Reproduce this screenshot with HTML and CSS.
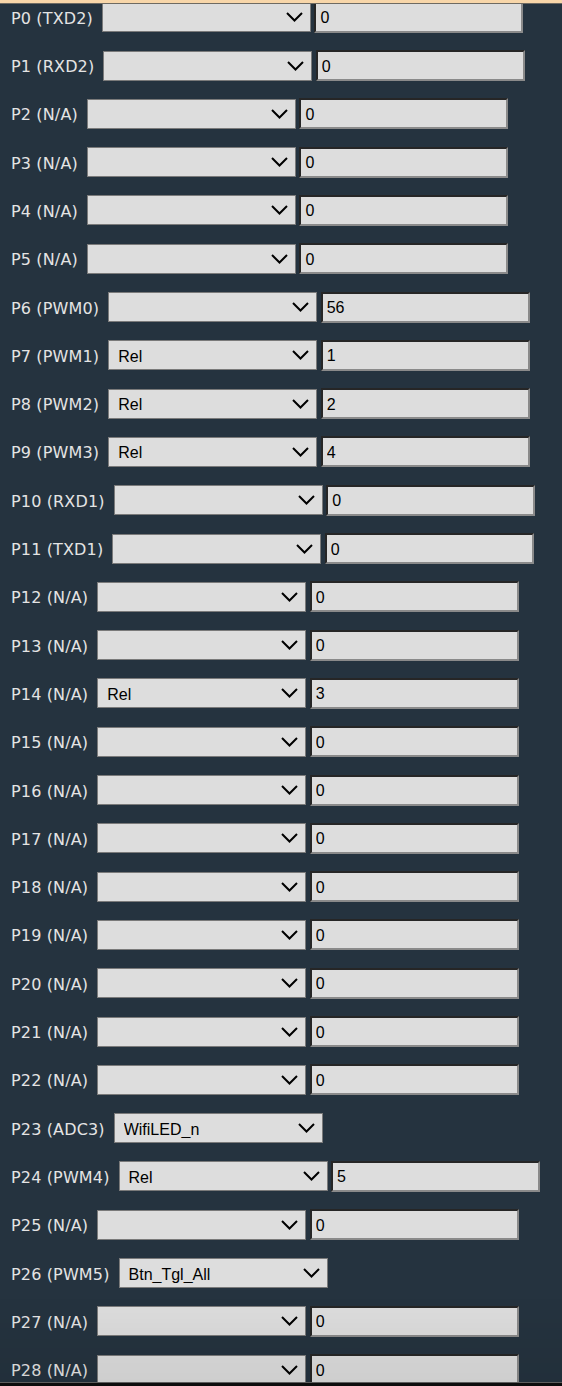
FILE: index.html
```html
<!DOCTYPE html>
<html lang="en">
<head>
<meta charset="utf-8">
<title>Pins</title>
<link rel="stylesheet" href="styles.css">
</head>
<body>
<div class="topbar"></div>
<form class="pins">
  <div class="pin"><label class="pin-label">P0 (TXD2)</label><select class="pin-role"><option></option><option>Rel</option></select><input class="pin-channel" type="text" value="0"></div>
  <div class="pin"><label class="pin-label">P1 (RXD2)</label><select class="pin-role"><option></option><option>Rel</option></select><input class="pin-channel" type="text" value="0"></div>
  <div class="pin"><label class="pin-label">P2 (N/A)</label><select class="pin-role"><option></option><option>Rel</option></select><input class="pin-channel" type="text" value="0"></div>
  <div class="pin"><label class="pin-label">P3 (N/A)</label><select class="pin-role"><option></option><option>Rel</option></select><input class="pin-channel" type="text" value="0"></div>
  <div class="pin"><label class="pin-label">P4 (N/A)</label><select class="pin-role"><option></option><option>Rel</option></select><input class="pin-channel" type="text" value="0"></div>
  <div class="pin"><label class="pin-label">P5 (N/A)</label><select class="pin-role"><option></option><option>Rel</option></select><input class="pin-channel" type="text" value="0"></div>
  <div class="pin"><label class="pin-label">P6 (PWM0)</label><select class="pin-role"><option></option><option>Rel</option></select><input class="pin-channel" type="text" value="56"></div>
  <div class="pin"><label class="pin-label">P7 (PWM1)</label><select class="pin-role"><option></option><option selected>Rel</option></select><input class="pin-channel" type="text" value="1"></div>
  <div class="pin"><label class="pin-label">P8 (PWM2)</label><select class="pin-role"><option></option><option selected>Rel</option></select><input class="pin-channel" type="text" value="2"></div>
  <div class="pin"><label class="pin-label">P9 (PWM3)</label><select class="pin-role"><option></option><option selected>Rel</option></select><input class="pin-channel" type="text" value="4"></div>
  <div class="pin"><label class="pin-label">P10 (RXD1)</label><select class="pin-role"><option></option><option>Rel</option></select><input class="pin-channel" type="text" value="0"></div>
  <div class="pin"><label class="pin-label">P11 (TXD1)</label><select class="pin-role"><option></option><option>Rel</option></select><input class="pin-channel" type="text" value="0"></div>
  <div class="pin"><label class="pin-label">P12 (N/A)</label><select class="pin-role"><option></option><option>Rel</option></select><input class="pin-channel" type="text" value="0"></div>
  <div class="pin"><label class="pin-label">P13 (N/A)</label><select class="pin-role"><option></option><option>Rel</option></select><input class="pin-channel" type="text" value="0"></div>
  <div class="pin"><label class="pin-label">P14 (N/A)</label><select class="pin-role"><option></option><option selected>Rel</option></select><input class="pin-channel" type="text" value="3"></div>
  <div class="pin"><label class="pin-label">P15 (N/A)</label><select class="pin-role"><option></option><option>Rel</option></select><input class="pin-channel" type="text" value="0"></div>
  <div class="pin"><label class="pin-label">P16 (N/A)</label><select class="pin-role"><option></option><option>Rel</option></select><input class="pin-channel" type="text" value="0"></div>
  <div class="pin"><label class="pin-label">P17 (N/A)</label><select class="pin-role"><option></option><option>Rel</option></select><input class="pin-channel" type="text" value="0"></div>
  <div class="pin"><label class="pin-label">P18 (N/A)</label><select class="pin-role"><option></option><option>Rel</option></select><input class="pin-channel" type="text" value="0"></div>
  <div class="pin"><label class="pin-label">P19 (N/A)</label><select class="pin-role"><option></option><option>Rel</option></select><input class="pin-channel" type="text" value="0"></div>
  <div class="pin"><label class="pin-label">P20 (N/A)</label><select class="pin-role"><option></option><option>Rel</option></select><input class="pin-channel" type="text" value="0"></div>
  <div class="pin"><label class="pin-label">P21 (N/A)</label><select class="pin-role"><option></option><option>Rel</option></select><input class="pin-channel" type="text" value="0"></div>
  <div class="pin"><label class="pin-label">P22 (N/A)</label><select class="pin-role"><option></option><option>Rel</option></select><input class="pin-channel" type="text" value="0"></div>
  <div class="pin"><label class="pin-label">P23 (ADC3)</label><select class="pin-role"><option></option><option selected>WifiLED_n</option></select></div>
  <div class="pin"><label class="pin-label">P24 (PWM4)</label><select class="pin-role"><option></option><option selected>Rel</option></select><input class="pin-channel" type="text" value="5"></div>
  <div class="pin"><label class="pin-label">P25 (N/A)</label><select class="pin-role"><option></option><option>Rel</option></select><input class="pin-channel" type="text" value="0"></div>
  <div class="pin"><label class="pin-label">P26 (PWM5)</label><select class="pin-role"><option></option><option selected>Btn_Tgl_All</option></select></div>
  <div class="pin"><label class="pin-label">P27 (N/A)</label><select class="pin-role"><option></option><option>Rel</option></select><input class="pin-channel" type="text" value="0"></div>
  <div class="pin"><label class="pin-label">P28 (N/A)</label><select class="pin-role"><option></option><option>Rel</option></select><input class="pin-channel" type="text" value="0"></div>
</form>
<div class="bottomfade"></div>
<div class="bottombar"></div>
</body>
</html>
```

FILE: styles.css
```css
html, body {
  margin: 0;
  padding: 0;
  background: #25333f;
}

body {
  font-family: "DejaVu Sans", Verdana, sans-serif;
  overflow: hidden;
}

.topbar {
  position: fixed;
  top: 0;
  left: 0;
  right: 0;
  height: 3px;
  background: #f8d6a9;
  border-bottom: 1px solid #6e6a62;
  z-index: 3;
}

.bottomfade {
  position: fixed;
  bottom: 0;
  left: 0;
  right: 0;
  height: 90px;
  background: linear-gradient(to bottom, rgba(0, 0, 0, 0), rgba(0, 0, 0, 0.07));
  pointer-events: none;
  z-index: 2;
}

.bottombar {
  position: fixed;
  bottom: 0;
  left: 0;
  right: 0;
  height: 3px;
  background: #0d0d0d;
  border-top: 1px solid #5e5e5e;
  z-index: 3;
}

.pins {
  margin: 0;
  padding: 2.3px 0 0 11px;
}

.pin {
  display: flex;
  align-items: center;
  height: 30px;
  margin-bottom: 18.3px;
}

.pin-label {
  color: #e4e4e4;
  font-size: 16px;
  letter-spacing: 0.15px;
  white-space: nowrap;
  margin-right: 9px;
  padding-top: 2px;
}

.pin-role {
  -webkit-appearance: none;
  appearance: none;
  box-sizing: border-box;
  width: 209px;
  height: 30px;
  margin: 0;
  padding: 2px 30px 0 9px;
  border: 1px solid #7a7a7a;
  border-radius: 0;
  background-color: #dddddd;
  background-image: url("data:image/svg+xml;utf8,<svg xmlns='http://www.w3.org/2000/svg' width='17' height='10' viewBox='0 0 17 10'><polyline points='1,1 8.5,8.5 16,1' fill='none' stroke='black' stroke-width='2'/></svg>");
  background-repeat: no-repeat;
  background-position: right 7px center;
  color: #000;
  font-family: "Liberation Sans", Arial, sans-serif;
  font-size: 16px;
}

.pin-channel {
  box-sizing: border-box;
  width: 209px;
  height: 31px;
  margin: 0 0 0 3.5px;
  padding: 2px 4px 0;
  border-style: solid;
  border-width: 2px;
  border-color: #262626 #8a8a8a #8a8a8a #262626;
  border-radius: 0;
  background: #dddddd;
  color: #000;
  font-family: "Liberation Sans", Arial, sans-serif;
  font-size: 16px;
  outline: none;
}
```
